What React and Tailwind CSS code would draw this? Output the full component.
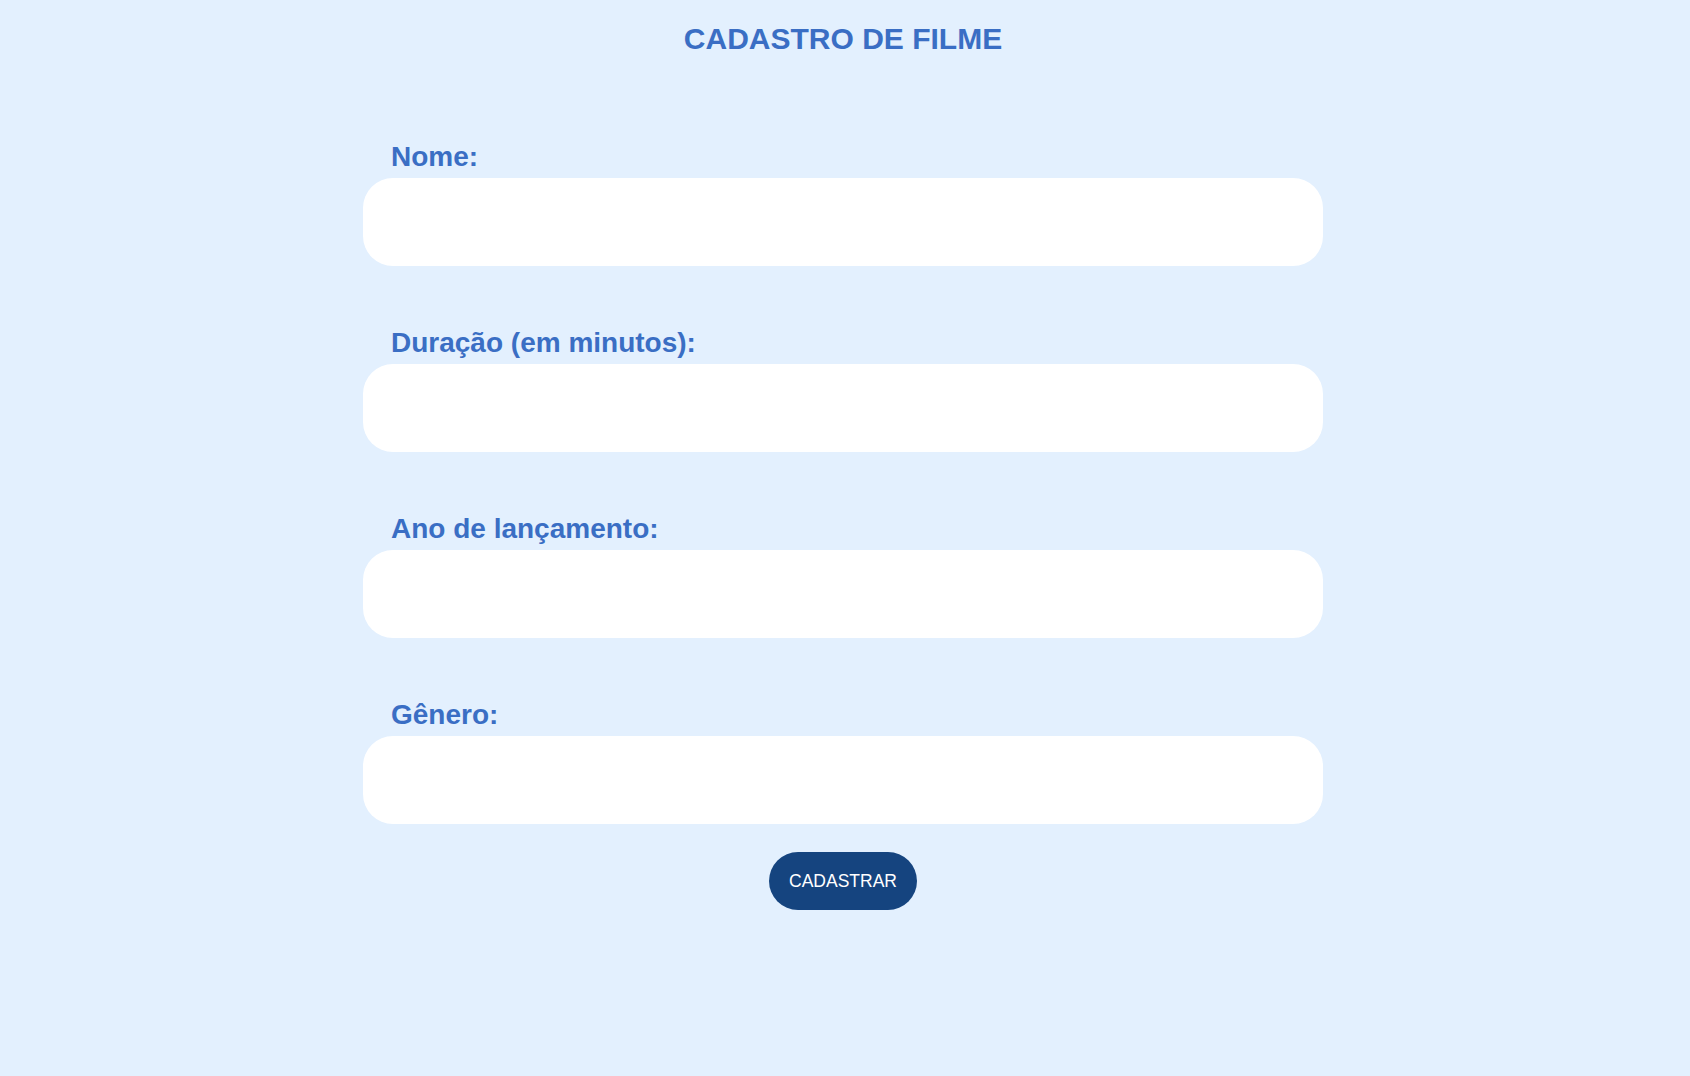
import React from 'react';

const fields = [
  { id: 'nome', label: 'Nome:' },
  { id: 'duracao', label: 'Duração (em minutos):' },
  { id: 'ano', label: 'Ano de lançamento:' },
  { id: 'genero', label: 'Gênero:' },
];

const App = () => {
  return (
    <div className="min-h-screen w-full bg-[#e3f0fe] pr-1 font-['Liberation_Sans',Arial,sans-serif]">
      <h1 className="pt-[22px] text-center text-[30px] leading-[34px] font-bold text-[#3a6ec4]">
        CADASTRO DE FILME
      </h1>

      <form className="mx-auto mt-[85px] flex w-[960px] flex-col">
        <div className="flex flex-col gap-[61px]">
          {fields.map((f) => (
            <div key={f.id} className="flex flex-col">
              <label htmlFor={f.id} className="pl-[28px] text-[28px] leading-[31px] font-bold text-[#3a6ec4]">
                {f.label}
              </label>
              <input
                id={f.id}
                type="text"
                className="mt-[6px] h-[88px] w-full rounded-[30px] bg-white px-7 text-[22px] text-gray-800 outline-none"
              />
            </div>
          ))}
        </div>

        {/* submit */}
        <button
          type="submit"
          className="mx-auto mt-[28px] h-[58px] rounded-full bg-[#15447f] px-[20px] text-[17.5px] text-white"
        >
          CADASTRAR
        </button>
      </form>
    </div>
  );
};

export default App;
